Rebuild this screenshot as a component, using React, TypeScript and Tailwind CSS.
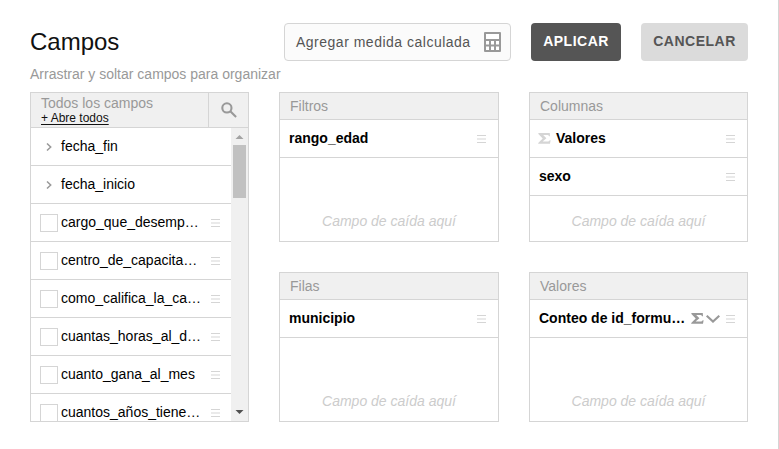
import React from "react";

const Grip = () => (
  <svg className="h-2 w-[9px] shrink-0" viewBox="0 0 9 8">
    <path d="M0 .5h9M0 4h9M0 7.5h9" stroke="#d5d5d5" strokeWidth="1.1" />
  </svg>
);

const Sigma = ({ className }: { className: string }) => (
  <svg className={className} viewBox="0 0 13 12" preserveAspectRatio="none" fill="currentColor">
    <path d="M.4 0H11.8L12 3.6H11C10.7 2.6 10 2.3 8.8 2.3H5.2L8.4 5.7 4.6 9.3H9.3C10.6 9.3 11.2 8.9 11.6 7.8H12.6L12 11.8H.2V10.8L4.7 6.1.4 1.2Z" />
  </svg>
);

const folders = ["fecha_fin", "fecha_inicio"];
const fields = [
  "cargo_que_desemp…",
  "centro_de_capacita…",
  "como_califica_la_ca…",
  "cuantas_horas_al_d…",
  "cuanto_gana_al_mes",
  "cuantos_años_tiene…",
];

type PanelProps = { title: string; width: string; children: React.ReactNode };

function Panel({ title, width, children }: PanelProps) {
  return (
    <section className={`flex h-[150px] flex-col border border-[#d5d5d5] ${width}`}>
      <h2 className="h-[27px] shrink-0 border-b border-[#d5d5d5] bg-[#f0f0f0] pl-2.5 text-[14px] leading-[26px] text-[#999]">
        {title}
      </h2>
      {children}
      <p className="mt-auto mb-[10px] text-center text-[14px] leading-5 text-[#ccc] italic">Campo de caída aquí</p>
    </section>
  );
}

function PanelRow({ children }: { children: React.ReactNode }) {
  return (
    <div className="flex h-[38px] shrink-0 items-center border-b border-[#d5d5d5] pr-3 pl-[9px] text-[14px] font-bold text-black">
      {children}
      <span className="mt-px ml-auto flex">
        <Grip />
      </span>
    </div>
  );
}

export default function App() {
  return (
    <div className="flex h-[449px] w-[779px] flex-col overflow-hidden border-r border-[#d5d5d5] bg-white pl-[30px] font-['Liberation_Sans',Arial,sans-serif] text-[#111]">
      <header className="flex h-[92px] w-[718px] shrink-0 pt-[23px]">
        <div className="w-[254px] shrink-0">
          <h1 className="text-[24px] leading-[38px]">Campos</h1>
          <p className="mt-[3px] text-[14px] leading-5 whitespace-nowrap text-[#999]">
            Arrastrar y soltar campos para organizar
          </p>
        </div>
        <button className="flex h-[38px] w-[227px] items-center rounded border border-[#d5d5d5] bg-[#fbfbfb] pr-[9px] pl-[11px] text-[14px] tracking-[0.5px] whitespace-nowrap text-[#555]">
          <span className="mt-px">Agregar medida calculada</span>
          <svg className="ml-auto h-5 w-[17px]" viewBox="0 0 17 20">
            <rect width="17" height="20" rx="1" fill="#999" />
            <path fill="#fff" d="M2 2h13v5H2zM2 9h3v3.5H2zM7 9h3v3.5H7zM12 9h3v3.5h-3zM2 14.5h3V18H2zM7 14.5h3V18H7zM12 14.5h3V18h-3z" />
          </svg>
        </button>
        <button className="ml-5 h-[38px] w-[90px] rounded bg-[#555] pb-[2px] text-[14px] font-bold tracking-[0.5px] text-white">
          APLICAR
        </button>
        <button className="ml-5 h-[38px] w-[107px] rounded bg-[#dbdbdb] pb-[2px] text-[14px] font-bold tracking-[0.5px] text-[#555]">
          CANCELAR
        </button>
      </header>

      <main className="flex gap-[30px]">
        <section className="flex h-[330px] w-[219px] flex-col border border-[#d5d5d5]">
          <div className="flex h-[35px] shrink-0 border-b border-[#d5d5d5] bg-[#f0f0f0]">
            <div className="flex-1 pl-2.5">
              <div className="pt-[2px] text-[14px] leading-4 text-[#999]">Todos los campos</div>
              <div className="text-[12px] leading-[14px] underline underline-offset-2">+ Abre todos</div>
            </div>
            <div className="flex w-10 items-center justify-center border-l border-[#d5d5d5]">
              <svg className="h-4 w-4" viewBox="0 0 16 16" fill="none" stroke="#999" strokeWidth="2.1">
                <circle cx="5.9" cy="5.9" r="4.6" />
                <path d="m9.3 9.3 5.8 5.8" />
              </svg>
            </div>
          </div>
          <div className="flex min-h-0 flex-1">
            <ul className="w-[200px] overflow-hidden text-[14px] text-black">
              {folders.map((name) => (
                <li key={name} className="flex h-[38px] items-center border-b border-[#d5d5d5] pl-[15px]">
                  <svg className="mt-px mr-[9px] h-2 w-[6px]" viewBox="0 0 6 8" fill="none" stroke="#999" strokeWidth="1.5">
                    <path d="m1 .5 3.7 3.5L1 7.5" />
                  </svg>
                  {name}
                </li>
              ))}
              {fields.map((name) => (
                <li key={name} className="flex h-[38px] items-center border-b border-[#d5d5d5] pr-[11px] pl-[9px]">
                  <span className="mt-px mr-[3px] h-[18px] w-[18px] shrink-0 border border-[#d5d5d5]" />
                  <span className="whitespace-nowrap">{name}</span>
                  <span className="mt-px ml-auto flex">
                    <Grip />
                  </span>
                </li>
              ))}
            </ul>
            <div className="flex w-[17px] flex-col items-center bg-[#f0f0f0]">
              <svg className="h-[17px] w-[17px]" viewBox="0 0 17 17">
                <path d="M4.5 11 8.5 7l4 4z" fill="#a3a3a3" />
              </svg>
              <div className="h-[53px] w-[13px] bg-[#c1c1c1]" />
              <svg className="mt-auto h-[17px] w-[17px]" viewBox="0 0 17 17">
                <path d="M4.5 6h8l-4 4z" fill="#505050" />
              </svg>
            </div>
          </div>
        </section>

        <div className="flex flex-col gap-[30px]">
          <Panel title="Filtros" width="w-[220px]">
            <PanelRow>rango_edad</PanelRow>
          </Panel>
          <Panel title="Filas" width="w-[220px]">
            <PanelRow>municipio</PanelRow>
          </Panel>
        </div>

        <div className="flex flex-col gap-[30px]">
          <Panel title="Columnas" width="w-[219px]">
            <PanelRow>
              <Sigma className="mr-[5px] -ml-px h-[11px] w-[13px] text-[#d5d5d5]" />
              Valores
            </PanelRow>
            <PanelRow>sexo</PanelRow>
          </Panel>
          <Panel title="Valores" width="w-[219px]">
            <PanelRow>
              <span className="w-[152px] whitespace-nowrap">Conteo de id_formu…</span>
              <Sigma className="h-[11px] w-[13px] text-[#999]" />
              <svg className="mt-px ml-[2px] h-2 w-[14px]" viewBox="0 0 14 8" fill="none" stroke="#999" strokeWidth="2.1">
                <path d="m.7.8 6.3 5.8 6.3-5.8" />
              </svg>
            </PanelRow>
          </Panel>
        </div>
      </main>
    </div>
  );
}
